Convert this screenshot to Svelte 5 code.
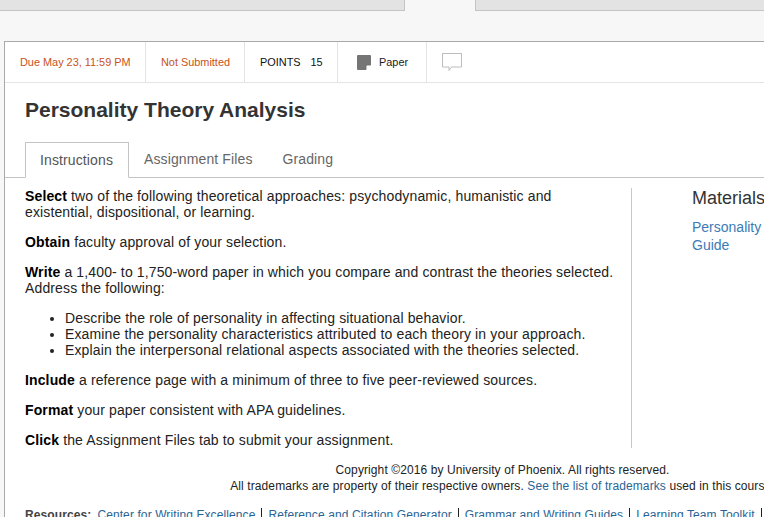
<script>
  const bullets = [
    'Describe the role of personality in affecting situational behavior.',
    'Examine the personality characteristics attributed to each theory in your approach.',
    'Explain the interpersonal relational aspects associated with the theories selected.'
  ];
  const resources = [
    'Center for Writing Excellence',
    'Reference and Citation Generator',
    'Grammar and Writing Guides',
    'Learning Team Toolkit'
  ];
</script>

<div class="page">
  <div class="top-tabs">
    <div class="top-tab first"></div>
    <div class="top-gap"></div>
    <div class="top-tab last"></div>
  </div>

  <div class="card">
    <div class="meta-bar">
      <div class="meta due">Due May 23, 11:59 PM</div>
      <div class="meta status">Not Submitted</div>
      <div class="meta points"><span>POINTS</span><span>15</span></div>
      <div class="meta paper">
        <svg width="14" height="15" viewBox="0 0 14 15">
          <path d="M1 0h12a1 1 0 0 1 1 1v9l-5 5H1a1 1 0 0 1-1-1V1a1 1 0 0 1 1-1z" fill="#757575" />
          <path d="M14 10.500l-4.500 4.500v-3.500a1 1 0 0 1 1-1z" fill="#fff" />
        </svg>
        <span>Paper</span>
      </div>
      <div class="meta comment">
        <svg width="21" height="19" viewBox="0 0 21 19">
          <path d="M.5.500h19v13.500H9.500l-2.500 3.500V14H.5z" fill="#fff" stroke="#bdbdbd" />
        </svg>
      </div>
    </div>

    <h1>Personality Theory Analysis</h1>

    <div class="tabs">
      <div class="tab active">Instructions</div>
      <div class="tab">Assignment Files</div>
      <div class="tab">Grading</div>
    </div>

    <div class="columns">
      <div class="instructions">
        <p><b>Select</b> two of the following theoretical approaches: psychodynamic, humanistic and existential, dispositional, or learning.</p>
        <p><b>Obtain</b> faculty approval of your selection.</p>
        <p><b>Write</b> a 1,400- to 1,750-word paper in which you compare and contrast the theories selected. Address the following:</p>
        <ul>
          {#each bullets as item}
            <li>{item}</li>
          {/each}
        </ul>
        <p><b>Include</b> a reference page with a minimum of three to five peer-reviewed sources.</p>
        <p><b>Format</b> your paper consistent with APA guidelines.</p>
        <p><b>Click</b> the Assignment Files tab to submit your assignment.</p>
      </div>
      <div class="materials">
        <h2>Materials</h2>
        <span class="link">Personality Guide</span>
      </div>
    </div>

    <div class="copyright">
      <div>Copyright ©2016 by University of Phoenix. All rights reserved.</div>
      <div>All trademarks are property of their respective owners. <span class="link">See the list of trademarks</span> used in this course.</div>
    </div>

    <div class="resources">
      <span class="label">Resources:</span>
      {#each resources as res}
        <span class="res link">{res}</span>
      {/each}
    </div>
  </div>
</div>

<style>
  :global(body) {
    margin: 0;
    background: #f7f7f7;
  }

  .page {
    width: 764px;
    height: 517px;
    overflow: hidden;
    font-family: "Liberation Sans", Arial, sans-serif;
    color: #222;
  }

  .top-tabs {
    display: flex;
    height: 11px;
  }

  .top-tab {
    background: #e3e3e3;
    border-bottom: 1px solid #c4c4c4;
    height: 10px;
  }

  .top-tab.first {
    width: 404px;
    border-right: 1px solid #c4c4c4;
  }

  .top-gap {
    width: 70px;
  }

  .top-tab.last {
    flex: 1;
    border-left: 1px solid #c4c4c4;
  }

  .card {
    margin: 30px 0 0 4px;
    width: 1000px;
    background: #fff;
    border: 1px solid #a9a9a9;
    border-bottom: none;
  }

  .meta-bar {
    display: flex;
    height: 40px;
    border-bottom: 1px solid #e4e4e4;
    font-size: 10.900px;
    white-space: nowrap;
  }

  .meta {
    display: flex;
    align-items: center;
    box-sizing: border-box;
    border-right: 1px solid #e4e4e4;
    padding: 0 15px;
  }

  .due, .status {
    color: #c8521a;
  }

  .due {
    width: 141px;
  }

  .status {
    width: 99px;
  }

  .points {
    width: 93px;
    gap: 10px;
    color: #111;
  }

  .paper {
    width: 89px;
    gap: 8px;
    padding: 0 0 0 19px;
    color: #222;
  }

  .comment {
    border-right: none;
  }

  h1 {
    margin: 14px 0 0 20px;
    font-size: 21px;
    line-height: 26px;
    font-weight: bold;
    color: #333;
  }

  .tabs {
    display: flex;
    margin-top: 19px;
    padding-left: 20px;
    border-bottom: 1px solid #c4c4c4;
    height: 35px;
  }

  .tab {
    padding: 0 15px;
    font-size: 14px;
    line-height: 35px;
    letter-spacing: 0.120px;
    color: #666;
  }

  .tab.active {
    box-sizing: border-box;
    width: 104px;
    height: 36px;
    background: #fff;
    border: 1px solid #c4c4c4;
    border-bottom: 1px solid #fff;
    padding: 0 14px;
    line-height: 34px;
    color: #555;
  }

  .columns {
    display: flex;
    margin-top: 10px;
    padding-left: 20px;
  }

  .instructions {
    width: 607px;
    box-sizing: border-box;
    border-right: 1px solid #c9c9c9;
    padding-right: 14px;
    font-size: 14px;
    line-height: 16px;
    letter-spacing: 0.130px;
    color: #222;
  }

  .instructions p {
    margin: 0 0 14px;
  }

  .instructions p:last-child {
    margin-bottom: 0;
  }

  .instructions b {
    color: #000;
  }

  ul {
    margin: 0 0 14px;
    padding-left: 40px;
  }

  .materials {
    margin-left: 60px;
    width: 100px;
    font-size: 14px;
    line-height: 18px;
  }

  h2 {
    margin: 0 0 10px;
    font-size: 18px;
    line-height: 20px;
    font-weight: normal;
    color: #333;
    white-space: nowrap;
  }

  .link {
    color: #2a6496;
  }

  .materials .link {
    color: #3b7bb5;
  }

  .copyright {
    margin-top: 14px;
    width: 995px;
    text-align: center;
    font-size: 12px;
    line-height: 16px;
    letter-spacing: 0.100px;
    color: #222;
  }

  .resources {
    display: flex;
    align-items: center;
    margin: 14px 0 0 20px;
    font-size: 12px;
    line-height: 14px;
    letter-spacing: 0.100px;
    white-space: nowrap;
  }

  .label {
    font-weight: bold;
    color: #444;
  }

  .res {
    padding: 0 6px;
    border-right: 1px solid #222;
  }
</style>
